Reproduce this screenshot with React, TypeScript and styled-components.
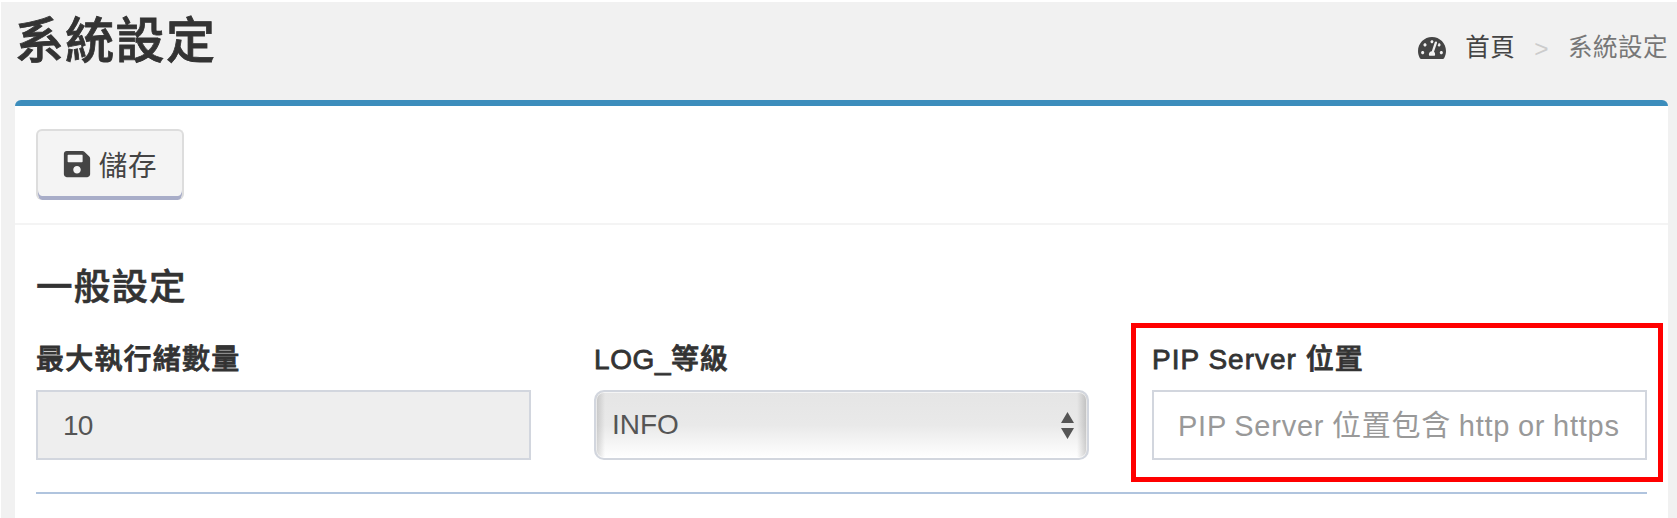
import React from 'react';
import styled, { createGlobalStyle } from 'styled-components';
import { FaSave, FaTachometerAlt } from 'react-icons/fa';

const GlobalStyle = createGlobalStyle`
  * { box-sizing: border-box; }
  body {
    margin: 0;
    background: #fff;
    color: #333;
    font-family: "Liberation Sans", "Noto Sans CJK TC", sans-serif;
    overflow: hidden;
  }
`;

const Page = styled.main`
  height: 518px;
  border-top: 2px solid #fff;
  border-left: 1px solid #fff;
  background: #f1f1f1;
  padding: 0 9px 0 14px;
  display: flex;
  flex-direction: column;
`;

const Header = styled.header`
  height: 98px;
  flex: none;
  display: flex;
  justify-content: space-between;
`;

const Title = styled.h1`
  margin: 4px 0 0;
  font-size: 49px;
  line-height: 70px;
  font-weight: 500;
  letter-spacing: 1.3px;
  -webkit-text-stroke: 0.8px #333;
`;

const Breadcrumb = styled.nav`
  display: flex;
  align-items: center;
  height: 36px;
  margin-top: 28px;
  font-size: 24.5px;
  line-height: 36px;
  letter-spacing: 0.5px;
  color: #777;
`;

const HomeLink = styled.a`
  display: flex;
  align-items: center;
  gap: 19px;
  color: #444;
`;

const Separator = styled.span`
  color: #ccc;
  margin: 2px 19px 0 19px;
`;

const Card = styled.section`
  flex: 1;
  background: #fff;
  border-top: 6px solid #3c8dbc;
  border-radius: 6px 6px 0 0;
`;

const Toolbar = styled.div`
  height: 119px;
  padding: 23px 21px;
  border-bottom: 2px solid #f4f4f4;
`;

const SaveButton = styled.button`
  display: flex;
  align-items: center;
  justify-content: center;
  gap: 7px;
  width: 148px;
  height: 71px;
  padding: 0 1px 4px 0;
  border: 2px solid #ddd;
  border-radius: 6px;
  border-bottom: 0;
  background: #f4f4f4;
  box-shadow: inset 0 -4px 0 #a8adc8;
  color: #444;
  font: inherit;
  font-size: 28.5px;
  letter-spacing: 0.8px;

  svg {
    margin-top: 1px;
  }
`;

const Body = styled.div`
  padding: 37px 21px 0;
`;

const SectionTitle = styled.h2`
  margin: 0;
  font-size: 36.5px;
  line-height: 52px;
  font-weight: 500;
  letter-spacing: 1.2px;
  -webkit-text-stroke: 0.6px #333;
`;

const Fields = styled.div`
  display: grid;
  grid-template-columns: repeat(3, 495px);
  column-gap: 63px;
  height: 180px;
  padding-top: 26px;
  border-bottom: 2px solid #b0c4de;
`;

const Field = styled.div`
  position: relative;
`;

const Label = styled.label<{ $spacing: number }>`
  display: block;
  height: 50px;
  font-size: 28px;
  line-height: 40px;
  font-weight: 500;
  letter-spacing: ${(p) => p.$spacing}px;
  -webkit-text-stroke: 0.8px #333;
`;

const Input = styled.input`
  display: block;
  width: 100%;
  height: 70px;
  padding: 2px 25px 0 24px;
  border: 2px solid #d2d6de;
  border-radius: 0;
  background: #fff;
  font: inherit;
  font-size: 29px;
  letter-spacing: 0.75px;
  word-spacing: -1px;
  color: #555;
  &:disabled {
    background: #eee;
    font-size: 28px;
    letter-spacing: -0.7px;
    padding-left: 25px;
  }
  &::placeholder {
    color: #999;
  }
`;

const Select = styled.div`
  display: flex;
  align-items: center;
  justify-content: space-between;
  height: 70px;
  padding: 0 13px 0 16px;
  border: 2px solid #d2d6de;
  border-radius: 10px;
  background:
    linear-gradient(to right, rgba(120, 120, 120, 0.3), rgba(160, 160, 160, 0) 9px),
    linear-gradient(to left, rgba(120, 120, 120, 0.36), rgba(160, 160, 160, 0) 10px),
    linear-gradient(#e5e5e5, #e9e9e9 50%, #fff);
  box-shadow: inset 0 0 0 1px rgba(255, 255, 255, 0.6);
  font-size: 28px;
  color: #555;
`;

const Highlight = styled.div`
  position: absolute;
  top: -17px;
  left: -21px;
  width: 532px;
  height: 159px;
  border: 5px solid #f00;
  pointer-events: none;
`;

export default function App() {
  return (
    <>
      <GlobalStyle />
      <Page>
        <Header>
          <Title>系統設定</Title>
          <Breadcrumb>
            <HomeLink>
              <FaTachometerAlt size={28} />
              <span>首頁</span>
            </HomeLink>
            <Separator>&gt;</Separator>
            <span>系統設定</span>
          </Breadcrumb>
        </Header>
        <Card>
          <Toolbar>
            <SaveButton>
              <FaSave size={30} />
              <span>儲存</span>
            </SaveButton>
          </Toolbar>
          <Body>
            <SectionTitle>一般設定</SectionTitle>
            <Fields>
              <Field>
                <Label $spacing={1.2}>最大執行緒數量</Label>
                <Input disabled value="10" readOnly />
              </Field>
              <Field>
                <Label $spacing={0.6}>LOG_等級</Label>
                <Select>
                  <span>INFO</span>
                  <svg width="13" height="27" viewBox="0 0 13 27" fill="#555">
                    <path d="M6.5 0L13 11H0zM0 16h13L6.5 27z" />
                  </svg>
                </Select>
              </Field>
              <Field>
                <Label $spacing={1}>PIP Server 位置</Label>
                <Input placeholder="PIP Server 位置包含 http or https" />
                <Highlight />
              </Field>
            </Fields>
          </Body>
        </Card>
      </Page>
    </>
  );
}
